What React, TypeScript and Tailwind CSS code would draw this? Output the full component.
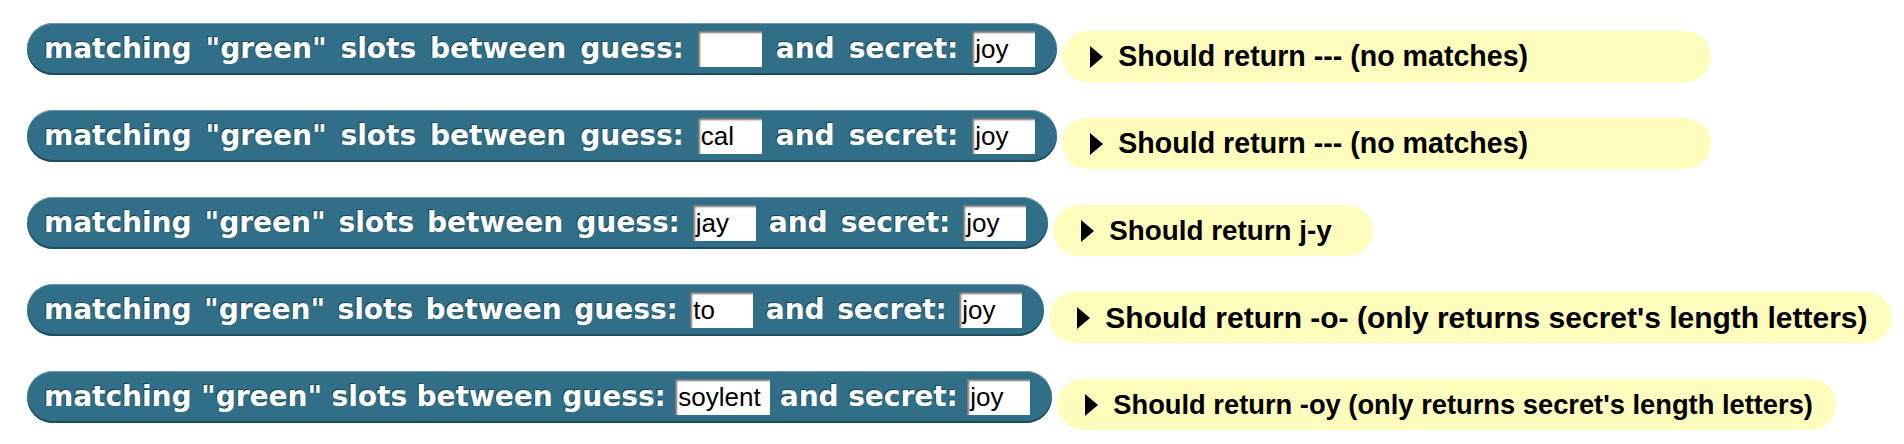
import React from "react";

type Row = {
  guess: string;
  gap: string;
  gw: string;
  result: string;
  yw: string;
  ts: string;
};

const rows: Row[] = [
  { guess: "", gap: "gap-[14px]", gw: "w-[64px]", result: "Should return --- (no matches)", yw: "w-[649px]", ts: "text-[28.6px]" },
  { guess: "cal", gap: "gap-[14px]", gw: "w-[64px]", result: "Should return --- (no matches)", yw: "w-[649px]", ts: "text-[28.6px]" },
  { guess: "jay", gap: "gap-[13px]", gw: "w-[63px]", result: "Should return j-y", yw: "w-[320px]", ts: "text-[27.8px]" },
  { guess: "to", gap: "gap-[12.5px]", gw: "w-[63px]", result: "Should return -o- (only returns secret's length letters)", yw: "w-[843px]", ts: "text-[30px]" },
  { guess: "soylent", gap: "gap-[9.5px]", gw: "w-[95px]", result: "Should return -oy (only returns secret's length letters)", yw: "w-[779px]", ts: "text-[27.3px]" },
];

function Slot({ value, w }: { value: string; w: string }) {
  return (
    <div
      className={`${w} h-[36px] bg-white flex items-center pl-[3px] shadow-[inset_2px_2px_2px_rgba(0,0,0,0.55)] text-black font-normal text-[26px] leading-none overflow-hidden [text-shadow:none]`}
      style={{ fontFamily: '"Liberation Sans", Arial, sans-serif' }}
    >
      {value}
    </div>
  );
}

function Word({ children }: { children: React.ReactNode }) {
  return <span className="[text-shadow:-1px_-1px_0_#1b4252]">{children}</span>;
}

export default function App() {
  return (
    <div className="w-[1904px] h-[444px] bg-white pt-[23px] pl-[27px] flex flex-col gap-[28px]">
      {rows.map((r, i) => (
        <div key={i} className="flex items-start">
          <div
            className={`h-[52px] rounded-full bg-[#316f88] pl-[17px] pr-[22px] flex items-center ${r.gap} text-white font-bold text-[28px] leading-none whitespace-nowrap shadow-[inset_0_1px_0_#6f9db0,inset_0_-2px_0_#1f4c5d]`}
            style={{ fontFamily: '"DejaVu Sans", Verdana, sans-serif' }}
          >
            <Word>matching</Word>
            <Word>"green"</Word>
            <Word>slots</Word>
            <Word>between</Word>
            <Word>guess:</Word>
            <Slot value={r.guess} w={r.gw} />
            <Word>and</Word>
            <Word>secret:</Word>
            <Slot value="joy" w="w-[63px]" />
          </div>
          <div
            className={`${r.yw} ml-[5px] mt-[8px] h-[51px] rounded-full bg-[#fefdbe] flex items-center pl-[28px] gap-[15px] text-black font-bold ${r.ts} leading-none whitespace-nowrap`}
            style={{ fontFamily: '"Liberation Sans", Arial, sans-serif' }}
          >
            <svg width="13" height="22" viewBox="0 0 13 22" className="shrink-0">
              <polygon points="0,0 13,11 0,22" fill="#000" />
            </svg>
            <span>{r.result}</span>
          </div>
        </div>
      ))}
    </div>
  );
}
